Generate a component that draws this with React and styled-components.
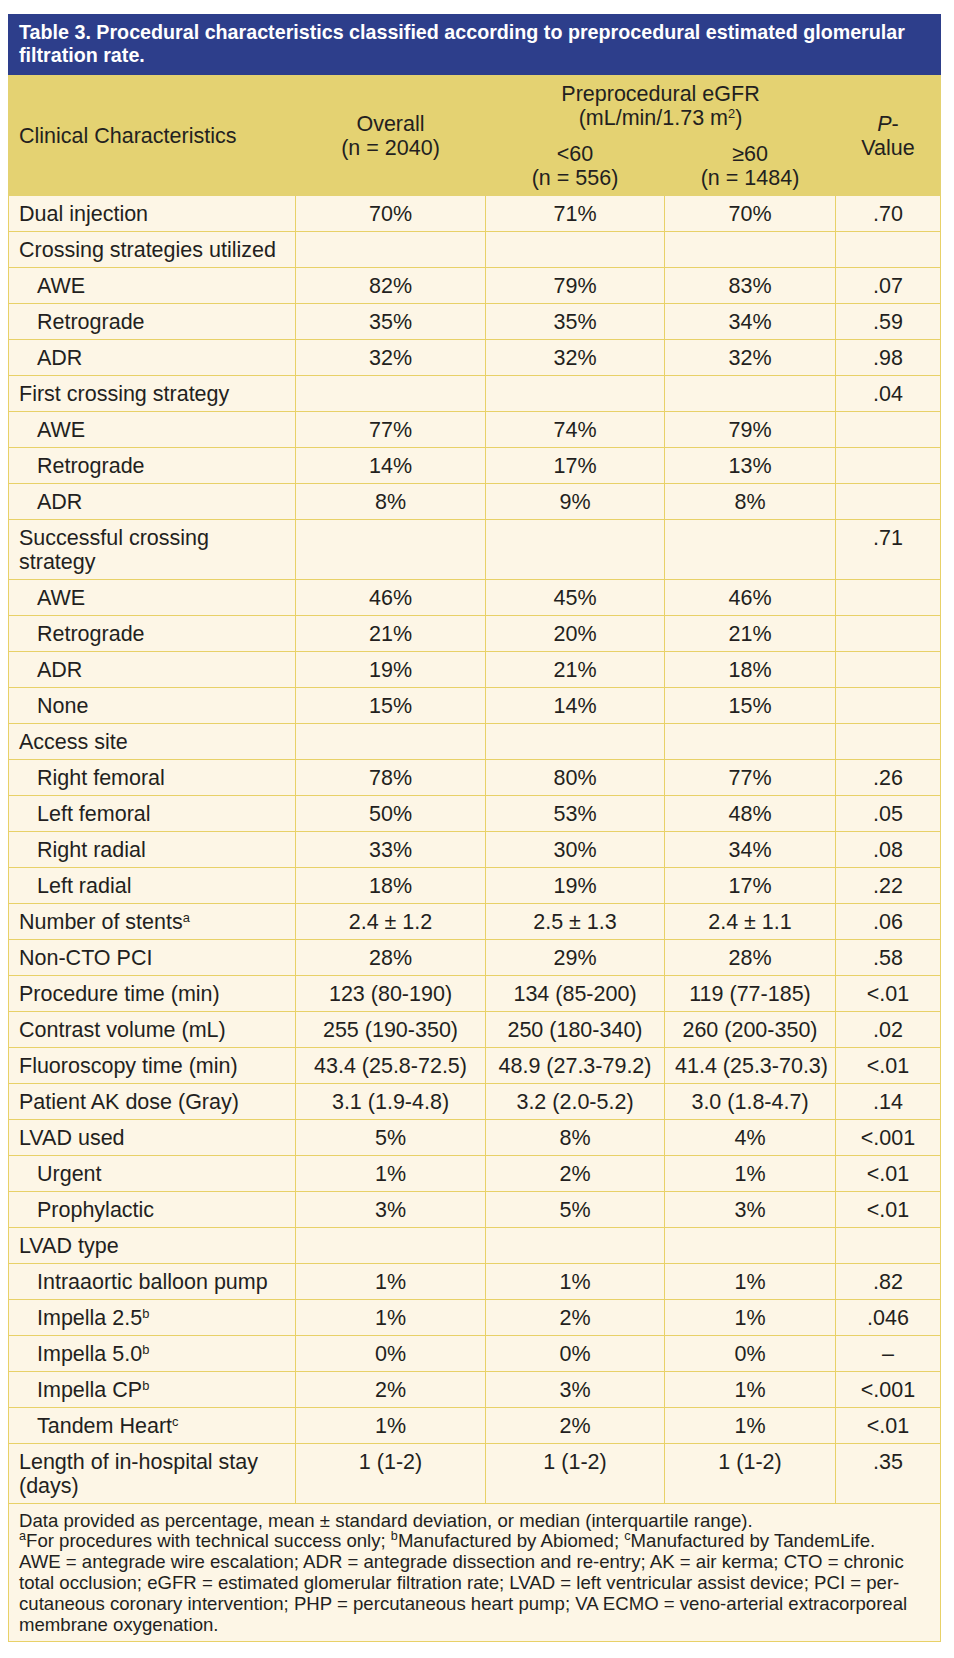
import React from "react";
import styled, { createGlobalStyle } from "styled-components";

const Global = createGlobalStyle`
  html, body { margin: 0; padding: 0; background: #ffffff; }
  body { font-family: "Liberation Sans", Arial, sans-serif; color: #231f20; }
`;

const Wrapper = styled.div`
  width: 932px;
  margin: 14px 0 0 8px;
`;

const Table = styled.table`
  width: 932px;
  table-layout: fixed;
  border-collapse: collapse;
  font-family: "Liberation Sans", Arial, sans-serif;
  font-size: 21.5px;
  line-height: 24px;
  color: #231f20;
`;

const Caption = styled.caption`
  caption-side: top;
  background: #2d3e8b;
  color: #ffffff;
  font-weight: bold;
  font-size: 19.7px;
  line-height: 23.3px;
  text-align: left;
  padding: 7px 11px 7px 11px;
`;

const HeadCell = styled.th`
  background: #e4d272;
  font-weight: normal;
  text-align: ${(p) => (p.$left ? "left" : "center")};
  vertical-align: middle;
  padding: 6px 10px 5px 10px;
  border: 1px solid #e4d272;
  height: 48px;
`;

const Cell = styled.td`
  background: #fdf6e6;
  text-align: ${(p) => (p.$label ? "left" : "center")};
  vertical-align: top;
  padding: 6px 10px 5px ${(p) => (p.$indent ? "28px" : "10px")};
  border: 1px solid #e8d168;
  white-space: nowrap;
`;

const FootCell = styled.td`
  background: #fdf6e6;
  border: 1px solid #e8d168;
  padding: 7px 11px 6px 10px;
  font-size: 18.6px;
  line-height: 20.8px;
  text-align: left;
  white-space: nowrap;
`;

const Sup = styled.sup`
  font-size: ${(p) => (p.$big ? "0.68em" : "0.6em")};
  line-height: 0;
  vertical-align: 0.55em;
`;

const Italic = styled.i`
  font-style: italic;
`;

const rows = [
  ["Dual injection", "70%", "71%", "70%", ".70", 0],
  ["Crossing strategies utilized", "", "", "", "", 0],
  ["AWE", "82%", "79%", "83%", ".07", 1],
  ["Retrograde", "35%", "35%", "34%", ".59", 1],
  ["ADR", "32%", "32%", "32%", ".98", 1],
  ["First crossing strategy", "", "", "", ".04", 0],
  ["AWE", "77%", "74%", "79%", "", 1],
  ["Retrograde", "14%", "17%", "13%", "", 1],
  ["ADR", "8%", "9%", "8%", "", 1],
  [["Successful crossing", "strategy"], "", "", "", ".71", 0],
  ["AWE", "46%", "45%", "46%", "", 1],
  ["Retrograde", "21%", "20%", "21%", "", 1],
  ["ADR", "19%", "21%", "18%", "", 1],
  ["None", "15%", "14%", "15%", "", 1],
  ["Access site", "", "", "", "", 0],
  ["Right femoral", "78%", "80%", "77%", ".26", 1],
  ["Left femoral", "50%", "53%", "48%", ".05", 1],
  ["Right radial", "33%", "30%", "34%", ".08", 1],
  ["Left radial", "18%", "19%", "17%", ".22", 1],
  [{ t: "Number of stents", s: "a" }, "2.4 ± 1.2", "2.5 ± 1.3", "2.4 ± 1.1", ".06", 0],
  ["Non-CTO PCI", "28%", "29%", "28%", ".58", 0],
  ["Procedure time (min)", "123 (80-190)", "134 (85-200)", "119 (77-185)", "<.01", 0],
  ["Contrast volume (mL)", "255 (190-350)", "250 (180-340)", "260 (200-350)", ".02", 0],
  ["Fluoroscopy time (min)", "43.4 (25.8-72.5)", "48.9 (27.3-79.2)", "41.4 (25.3-70.3)", "<.01", 0],
  ["Patient AK dose (Gray)", "3.1 (1.9-4.8)", "3.2 (2.0-5.2)", "3.0 (1.8-4.7)", ".14", 0],
  ["LVAD used", "5%", "8%", "4%", "<.001", 0],
  ["Urgent", "1%", "2%", "1%", "<.01", 1],
  ["Prophylactic", "3%", "5%", "3%", "<.01", 1],
  ["LVAD type", "", "", "", "", 0],
  ["Intraaortic balloon pump", "1%", "1%", "1%", ".82", 1],
  [{ t: "Impella 2.5", s: "b" }, "1%", "2%", "1%", ".046", 1],
  [{ t: "Impella 5.0", s: "b" }, "0%", "0%", "0%", "–", 1],
  [{ t: "Impella CP", s: "b" }, "2%", "3%", "1%", "<.001", 1],
  [{ t: "Tandem Heart", s: "c" }, "1%", "2%", "1%", "<.01", 1],
  [["Length of in-hospital stay", "(days)"], "1 (1-2)", "1 (1-2)", "1 (1-2)", ".35", 0],
];

function Label({ value }) {
  if (Array.isArray(value)) {
    return (
      <>
        {value[0]}
        <br />
        {value[1]}
      </>
    );
  }
  if (typeof value === "object") {
    return (
      <>
        {value.t}
        <Sup>{value.s}</Sup>
      </>
    );
  }
  return value;
}

const footLines = [
  <>Data provided as percentage, mean ± standard deviation, or median (interquartile range).</>,
  <>
    <Sup $big>a</Sup>For procedures with technical success only; <Sup $big>b</Sup>Manufactured by Abiomed;{" "}
    <Sup $big>c</Sup>Manufactured by TandemLife.
  </>,
  <>AWE = antegrade wire escalation; ADR = antegrade dissection and re-entry; AK = air kerma; CTO = chronic</>,
  <>total occlusion; eGFR = estimated glomerular filtration rate; LVAD = left ventricular assist device; PCI = per-</>,
  <>cutaneous coronary intervention; PHP = percutaneous heart pump; VA ECMO = veno-arterial extracorporeal</>,
  <>membrane oxygenation.</>,
];

export default function App() {
  return (
    <Wrapper>
      <Global />
      <Table>
        <Caption>
          Table 3. Procedural characteristics classified according to preprocedural estimated glomerular
          <br />
          filtration rate.
        </Caption>
        <colgroup>
          <col style={{ width: 287 }} />
          <col style={{ width: 190 }} />
          <col style={{ width: 179 }} />
          <col style={{ width: 171 }} />
          <col style={{ width: 105 }} />
        </colgroup>
        <thead>
          <tr>
            <HeadCell rowSpan={2} $left>
              Clinical Characteristics
            </HeadCell>
            <HeadCell rowSpan={2}>
              Overall
              <br />
              (n = 2040)
            </HeadCell>
            <HeadCell colSpan={2}>
              Preprocedural eGFR
              <br />
              (mL/min/1.73 m<Sup>2</Sup>)
            </HeadCell>
            <HeadCell rowSpan={2}>
              <Italic>P</Italic>-
              <br />
              Value
            </HeadCell>
          </tr>
          <tr>
            <HeadCell>
              &lt;60
              <br />
              (n = 556)
            </HeadCell>
            <HeadCell>
              ≥60
              <br />
              (n = 1484)
            </HeadCell>
          </tr>
        </thead>
        <tbody>
          {rows.map((r, i) => (
            <tr key={i}>
              <Cell $label $indent={r[5] === 1}>
                <Label value={r[0]} />
              </Cell>
              <Cell>{r[1]}</Cell>
              <Cell>{r[2]}</Cell>
              <Cell>{r[3]}</Cell>
              <Cell>{r[4]}</Cell>
            </tr>
          ))}
        </tbody>
        <tfoot>
          <tr>
            <FootCell colSpan={5}>
              {footLines.map((l, i) => (
                <React.Fragment key={i}>
                  {l}
                  {i < footLines.length - 1 && <br />}
                </React.Fragment>
              ))}
            </FootCell>
          </tr>
        </tfoot>
      </Table>
    </Wrapper>
  );
}
